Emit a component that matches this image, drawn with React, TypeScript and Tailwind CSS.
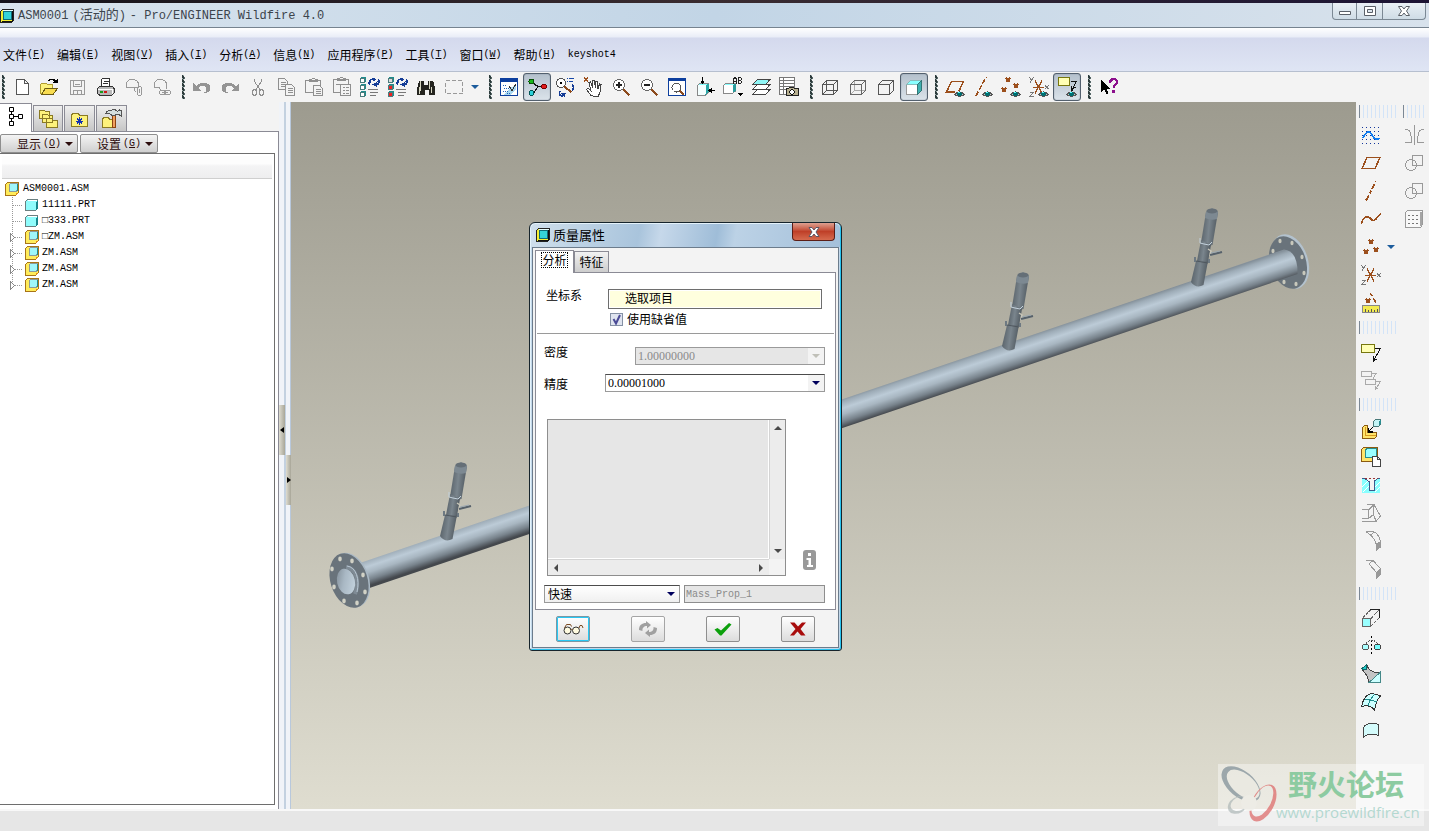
import React, { useState } from 'react';

interface Tool {
  id: string;
  label: string;
  active?: boolean;
}

const menus = [
  { text: '文件', key: 'F' },
  { text: '编辑', key: 'E' },
  { text: '视图', key: 'V' },
  { text: '插入', key: 'I' },
  { text: '分析', key: 'A' },
  { text: '信息', key: 'N' },
  { text: '应用程序', key: 'P' },
  { text: '工具', key: 'T' },
  { text: '窗口', key: 'W' },
  { text: '帮助', key: 'H' },
];

const fileTools: Tool[] = [
  { id: 'new', label: '新建' },
  { id: 'open', label: '打开' },
  { id: 'save', label: '保存' },
  { id: 'print', label: '打印' },
  { id: 'mail', label: '发送附件' },
  { id: 'link', label: '发送链接' },
];

const editTools: Tool[] = [
  { id: 'undo', label: '撤消' },
  { id: 'redo', label: '重做' },
  { id: 'cut', label: '剪切' },
  { id: 'copy', label: '复制' },
  { id: 'paste', label: '粘贴' },
  { id: 'pasteSpecial', label: '选择性粘贴' },
  { id: 'regen', label: '再生' },
  { id: 'regenList', label: '再生管理器' },
  { id: 'find', label: '查找' },
  { id: 'select', label: '选取框' },
];

const viewTools: Tool[] = [
  { id: 'repaint', label: '重画' },
  { id: 'spin', label: '旋转中心', active: true },
  { id: 'orient', label: '定向模式' },
  { id: 'hand', label: '外观库' },
  { id: 'zoomIn', label: '放大' },
  { id: 'zoomOut', label: '缩小' },
  { id: 'refit', label: '重新调整' },
  { id: 'reorient', label: '重定向' },
  { id: 'views', label: '已命名视图' },
  { id: 'layers', label: '层' },
  { id: 'viewMgr', label: '视图管理器' },
];

const displayTools: Tool[] = [
  { id: 'wireframe', label: '线框' },
  { id: 'hiddenLine', label: '隐藏线' },
  { id: 'noHidden', label: '消隐' },
  { id: 'shaded', label: '着色', active: true },
];

const datumTools: Tool[] = [
  { id: 'planeEye', label: '平面显示' },
  { id: 'axisEye', label: '轴显示' },
  { id: 'pointEye', label: '点显示' },
  { id: 'csysEye', label: '坐标系显示' },
  { id: 'noteEye', label: '注释显示', active: true },
];

const sideDatum: Tool[] = [
  { id: 'sketch', label: '草绘' },
  { id: 'plane', label: '平面' },
  { id: 'axis', label: '轴' },
  { id: 'curve', label: '曲线' },
  { id: 'points', label: '点' },
  { id: 'csys', label: '坐标系' },
  { id: 'measure', label: '分析特征' },
];

const sideNotes: Tool[] = [
  { id: 'note', label: '注释' },
  { id: 'noteCopy', label: '传播注释' },
];

const sideAssembly: Tool[] = [
  { id: 'assemble', label: '装配' },
  { id: 'create', label: '创建元件' },
  { id: 'hole', label: '孔' },
  { id: 'shell', label: '壳' },
  { id: 'round', label: '倒圆角' },
  { id: 'chamfer', label: '倒角' },
];

const sideShape: Tool[] = [
  { id: 'extrude', label: '拉伸' },
  { id: 'revolve', label: '旋转' },
  { id: 'sweep', label: '扫描' },
  { id: 'blend', label: '边界混合' },
  { id: 'style', label: '造型' },
];

const sideEdit: Tool[] = [
  { id: 'mirror', label: '镜像' },
  { id: 'merge', label: '合并' },
  { id: 'trim', label: '修剪' },
  { id: 'pattern', label: '阵列' },
];

const treeItems = [
  { name: '11111.PRT', part: true },
  { name: '□333.PRT', part: true },
  { name: '□ZM.ASM', part: false },
  { name: 'ZM.ASM', part: false },
  { name: 'ZM.ASM', part: false },
  { name: 'ZM.ASM', part: false },
];

const Eye = () => (
  <g>
    <path d="M9.5 17.5Q14.5 12.5 19.5 17.5Q14.5 21 9.5 17.5z" fill="#c4cccc" stroke="#555" />
    <circle cx="14.5" cy="17" r="2.4" fill="#006e70" />
    <path d="M13 15.5h2" stroke="#5ff" />
  </g>
);

const Cross = ({ x, y }: { x: number; y: number }) => (
  <path d={`M${x - 2} ${y - 2}l4 4m0-4l-4 4`} stroke="#9c4f1c" strokeWidth="1.5" />
);

const Block = ({ x, y, fill }: { x: number; y: number; fill: string }) => (
  <g>
    <path d={`M${x} ${y + 1}h4v4h-4z`} fill={fill} stroke="#4a7c7c" />
    <path d={`M${x} ${y}h5v4`} fill="none" stroke="#1f8c8c" />
  </g>
);

const Swirl = () => (
  <g fill="none" stroke="#143c96" strokeWidth="1.6">
    <path d="M9.5 6.500C9 3.500 11.500 1.500 14 2.500M19 3.500c.5 3.500-2 5-4.500 4" />
    <path d="M12.500 0v5l3.500-2.500zM16.500 5v5l-4-2.500z" fill="#143c96" stroke="none" />
    <path d="M7.500 5h4l-2 3zM17 4.500h3l-1.500-3z" fill="#143c96" stroke="none" />
  </g>
);

const Csys = () => (
  <g>
    <path d="M4 10.5h11M6 3.500l7 13M13 3.500l-7 13" stroke="#9c4f1c" strokeWidth="1.4" />
    <path d="M.5.500l2 2.500 2-2.500M2.500 3L1 5.500M.5 15.500h4l-4 4h4.500M16 8.500l3.500 3.500m0-3.500L16 12" stroke="#777" fill="none" />
  </g>
);

const Lens = ({ sign }: { sign: string }) => (
  <g>
    <path d="M12.5 12.5l6 6" stroke="#8c4a1c" strokeWidth="2" />
    <circle cx="8" cy="8" r="5.5" fill="#fff" stroke="#666" />
    <path d={sign} stroke="#222" strokeWidth="2" />
  </g>
);

const icons: Record<string, React.ReactNode> = {
  new: <path d="M5.500 2.500h8l3.500 3.500v11H5.500zM13.500 2.500v3.500H17" fill="#fff" stroke="#555" />,
  open: (
    <>
      <path d="M1.5 16V7.500l1.500-1.500h4l1.500 1.500h5V11H6l-3 6.500z" fill="#fdf27c" stroke="#b09c30" />
      <path d="M2.5 17.500L6.500 11H19l-5 6.500z" fill="#f8dc50" stroke="#6b5a12" />
      <path d="M9.5 4.500c1.500-3 5-3 7 0" fill="none" stroke="#000" strokeWidth="1.500" />
      <path d="M14 5.500h5v-4z" />
    </>
  ),
  save: (
    <g fill="none" stroke="#999">
      <path d="M3.500 3.500h14v14h-14zM6.500 3.500v6h8v-6M6.500 17.500v-4h8v4" />
      <path d="M8 7.500h5M10.500 14v3" />
    </g>
  ),
  print: (
    <>
      <path d="M6.500 9V2.500L8 1.500h6.500v8" fill="#fff" stroke="#333" />
      <path d="M8.500 4.500h5M8 6.500h5" stroke="#333" />
      <path d="M2.500 11.500L5 9h12l2 2.500v4.500l-2 2H4.500l-2-1.500z" fill="#b9b9b9" stroke="#333" />
      <path d="M3 12.500h14.500V17" stroke="#fff" fill="none" />
      <path d="M5 15h3" stroke="#1a9a1a" strokeWidth="2" />
      <path d="M9 15h3" stroke="#d01818" strokeWidth="2" />
    </>
  ),
  mail: (
    <g fill="none" stroke="#999">
      <path d="M3.500 10.500V6c2-5 9-5 12 0v4.500zM3.500 10.500h8v3l2 2" />
      <rect x="14.500" y="9.500" width="4" height="9" rx="2" />
      <path d="M16.500 12v4" />
    </g>
  ),
  link: (
    <g fill="none" stroke="#999">
      <path d="M15.500 11.500V6c-3-5-10-5-12 0v4.500h5l1 2.500" />
      <rect x="8.500" y="13.500" width="6" height="4" rx="2" />
      <rect x="13.500" y="13.500" width="6" height="4" rx="2" />
      <path d="M11 15.500h6" />
    </g>
  ),
  undo: <path d="M1 6v7.500h7.500L6 11c3-4 8.500-2.500 8.500 1 0 2-1.500 3.500-3.500 4.500 4-.5 7.500-2 7.500-5.500C18.500 5 9 3.500 4 9z" fill="#949494" />,
  redo: <path d="M19 6v7.500h-7.500L14 11c-3-4-8.500-2.500-8.500 1 0 2 1.500 3.500 3.500 4.500-4-.5-7.500-2-7.500-5.500C1.500 5 11 3.500 16 9z" fill="#949494" />,
  cut: (
    <g fill="none" stroke="#8f8f8f">
      <path d="M6.500 1.500v3l5.500 8M13.500 1.500v3L8 12.500" />
      <ellipse cx="6.500" cy="15.500" rx="2" ry="3" />
      <ellipse cx="13.500" cy="15.500" rx="2" ry="3" />
    </g>
  ),
  copy: (
    <g fill="#f3f3f3" stroke="#8f8f8f">
      <path d="M2.500 1.500h6l3 3v8h-9zM4.500 5.500h5M4.500 7.500h5M4.500 9.500h5" />
      <path d="M9.500 7.500h6l3 3v8h-9zM11.500 11.500h5M11.500 13.500h5M11.500 15.500h5" />
    </g>
  ),
  paste: (
    <g fill="#f3f3f3" stroke="#8f8f8f">
      <path d="M1.500 3.500h15v12h-15zM5.500 4.500v-2h2l1-1h2l1 1h2v2z" />
      <path d="M9.500 8.500h6l3 3v7h-9zM11.500 12.500h5M11.500 14.500h5M11.500 16.500h5" />
    </g>
  ),
  pasteSpecial: (
    <g fill="#f3f3f3" stroke="#8f8f8f">
      <path d="M1.500 2.500h15v13h-15zM5.500 3.500v-2h2l1-1h2l1 1h2v2zM4 7.500h4" />
      <path d="M8.500 7.500h10v11h-10zM10.500 10.500h2M14 10.500h3M10.500 13.500h2M14 13.500h3M10.500 16.500h2M14 16.500h3" />
    </g>
  ),
  regen: (
    <>
      <Block x={0.5} y={0.5} fill="#fff" />
      <Block x={0.5} y={7.5} fill="#fff" />
      <Block x={0.5} y={14.5} fill="#fff" />
      <path d="M8 12.500h10M10 15.500h8M10 18.500h6" stroke="#777" />
      <Swirl />
    </>
  ),
  regenList: (
    <>
      <Block x={0.5} y={0.5} fill="#ddd" />
      <Block x={0.5} y={7.5} fill="#e22" />
      <Block x={0.5} y={14.5} fill="#e22" />
      <path d="M8 12.500h10M10 15.500h8M10 18.500h6" stroke="#777" />
      <Swirl />
    </>
  ),
  find: (
    <>
      <path d="M3 3.500h5v4h4v-4h5l2 8v6h-6.500v-5h-4v5H1v-6z" fill="#24241f" />
      <path d="M4.500 4v10M3.500 10v7M13.500 4v8M15.500 10v6" stroke="#d8d8c4" />
    </>
  ),
  select: <path d="M1.500 3.500h17v13h-17z" fill="none" stroke="#999" strokeDasharray="4 2" />,
  repaint: (
    <>
      <path d="M1 1h18v18H1z" fill="#0d3f9e" />
      <path d="M2 5h16v13H2z" fill="#fff" />
      <path d="M4 18L17 6.500V12l-6 6z" fill="#a9d8f0" />
      <path d="M4 8.500h3M5 11.500h5M4 14.500h5M8 16.500h4" stroke="#2264b8" strokeDasharray="1 1" />
      <path d="M10 9l3 4.500L17 7" stroke="#333" fill="none" />
    </>
  ),
  spin: (
    <>
      <path d="M6 6l5 3.500-4 6M11 9.500h6" stroke="#111" strokeWidth="1.300" fill="none" />
      <circle cx="4.500" cy="4.500" r="2.500" fill="#18b818" stroke="#085008" />
      <circle cx="17" cy="9.500" r="2.500" fill="#e01c1c" stroke="#700" />
      <circle cx="4.500" cy="16" r="2.500" fill="#2cd0d8" stroke="#055" />
    </>
  ),
  orient: (
    <>
      <circle cx="6" cy="6" r="4.500" fill="#fff" stroke="#555" />
      <path d="M5 6h2" stroke="#000" strokeWidth="2" />
      <path d="M9.500 9.500l7 6" stroke="#8c4a1c" strokeWidth="2" />
      <path d="M12 1.500h1M14 1.500h5M12 4.500h1M14 4.500h4" stroke="#1647a8" />
      <path d="M17 7.500c3 3 1 5 0 5.500M5 14c-2 3 0 5 3 5" stroke="#143c96" strokeWidth="1.600" fill="none" />
      <path d="M6 16h5l-1.500 4z" fill="#143c96" />
    </>
  ),
  hand: (
    <>
      <Cross x={3} y={2.5} />
      <path d="M8 18.500L3.500 12.500l1.500-1.500 3 3-2-8.500 1.500-.5 2.500 6-.5-7 1.500-.5 1.500 7 .5-6 1.500.5.500 6.500 1.500-4.500 1.500.500-1 7.500-2 5z" fill="#fff" stroke="#444" />
    </>
  ),
  zoomIn: <Lens sign="M5 8h6M8 5v6" />,
  zoomOut: <Lens sign="M5 8h6" />,
  refit: (
    <>
      <path d="M1.500 1.500h17v17h-17z" fill="#fff" stroke="#0d3f9e" />
      <path d="M1 2.500h18" stroke="#0d3f9e" strokeWidth="3" />
      <circle cx="9.500" cy="10.500" r="4.500" fill="#fff" stroke="#555" />
      <path d="M13 14l4 4" stroke="#8c4a1c" strokeWidth="2" />
    </>
  ),
  reorient: (
    <>
      <path d="M2.500 8.500l2.500-2h8v9l-2.500 2.500h-8z" fill="#f4ffff" stroke="#888" />
      <path d="M3 8l2-1.500h8L11 8z" fill="#8ff" />
      <path d="M10.500 8.500l3-2v8.500l-3 2.500z" fill="#2aa6a6" />
      <path d="M7.500 0v5M15 13.500h5" stroke="#000" />
      <path d="M5 3.500h5L7.500 7zM16.500 11v5L13 13.500z" />
    </>
  ),
  views: (
    <>
      <path d="M.5 8.500l3-2.500h9v8l-3 2.500h-9z" fill="#fff" stroke="#888" />
      <path d="M1.500 8l2-1.500h8.500L10 8z" fill="#8ff" />
      <path d="M9.500 8.500l3-2v7.500l-3 2z" fill="#2a9c9c" />
      <path d="M10.500 6.500v-4l1-2h1l1 2v4M10.500 4.500h3M15.500.5h2l1 1v1l-1 1 1 1v1l-1 1h-2zM15.500 3.500h2" fill="none" stroke="#222" />
      <path d="M15 16h5l-2.500 3z" />
    </>
  ),
  layers: (
    <g stroke="#444">
      <path d="M1.500 17.500l5-5H19l-4.500 5z" fill="#fff" />
      <path d="M1.500 12.500l5-5H19l-4.500 5z" fill="#fff" />
      <path d="M1.500 7.500l5-5H19l-4.500 5z" fill="#8ff6f6" />
    </g>
  ),
  viewMgr: (
    <>
      <path d="M.5.500h15v17H.5zM.5 3.500h15M.5 6.500h15M.5 9.500h15M.5 12.500h15M4.500.5v17" fill="#fff" stroke="#777" />
      <path d="M7.500 11.500h2l1-1h4l1 1h4v7h-12z" fill="#b8b090" stroke="#222" />
      <circle cx="13" cy="15" r="2.300" fill="#fff" stroke="#111" />
    </>
  ),
  wireframe: <path d="M2.500 7.500h11v10h-11zM6.500 3.500h11v10h-11zM2.500 7.500l4-4M13.500 7.500l4-4M13.500 17.500l4-4M2.500 17.500l4-4" fill="none" stroke="#555" />,
  hiddenLine: (
    <>
      <path d="M6.500 3.500v10h11M2.500 17.500l4-4" fill="none" stroke="#aaa" />
      <path d="M2.500 7.500h11v10h-11zM2.500 7.500l4-4h11v10l-4 4M13.500 7.500l4-4" fill="none" stroke="#666" />
    </>
  ),
  noHidden: <path d="M2.500 7.500h11v10h-11zM2.500 7.500l4-4h11v10l-4 4M13.500 7.500l4-4" fill="none" stroke="#555" />,
  shaded: (
    <>
      <path d="M2.500 7.500h11v10h-11z" fill="#fff" stroke="#999" />
      <path d="M2.500 7.500l4-4h11l-4 4z" fill="#8ff" stroke="#8bb" />
      <path d="M13.500 7.500l4-4v10l-4 4z" fill="#3fb0b0" stroke="#377" />
    </>
  ),
  planeEye: (
    <>
      <path d="M10 15H1.500l5-10.500h12L14 14" fill="none" stroke="#9c4f1c" strokeWidth="1.500" />
      <Eye />
    </>
  ),
  axisEye: (
    <>
      <path d="M3 19L13 0" stroke="#9c4f1c" strokeWidth="1.600" strokeDasharray="5 2" />
      <Eye />
    </>
  ),
  pointEye: (
    <>
      <Cross x={7} y={3} />
      <Cross x={3} y={13} />
      <Cross x={15} y={9} />
      <Eye />
    </>
  ),
  csysEye: (
    <>
      <Csys />
      <Eye />
    </>
  ),
  noteEye: (
    <>
      <path d="M1.500.5h11v8h-11z" fill="#ffffb4" stroke="#77770f" />
      <path d="M14 4.500h5l-4 9M14.500 9v4l4-3" fill="none" stroke="#111" />
      <Eye />
    </>
  ),
  help: (
    <>
      <path d="M3 3v12l3-3 2.500 5 2-1L8 11.500h4z" />
      <path d="M12 6c0-5 7-5 7-1 0 3-3.500 3-3.500 6" fill="none" stroke="#8c0f8c" strokeWidth="2.200" />
      <path d="M14 13h3v3h-3z" fill="#8c0f8c" />
    </>
  ),
  sketch: (
    <>
      {[2.5, 6.5, 10.5, 14.5, 18.5].map((y) => (
        <path key={y} d={`M1 ${y}h18`} stroke="#14379c" strokeDasharray="1 3" />
      ))}
      <path d="M2 13c4-8 7-7 9-3 2 4 5 6 7 3" fill="none" stroke="#0f7cf0" strokeWidth="1.800" />
    </>
  ),
  plane: <path d="M1 15.500L6 4.500h13l-5 11z" fill="none" stroke="#9c4f1c" strokeWidth="1.500" />,
  axis: <path d="M5 19.500L15 .5" stroke="#9c4f1c" strokeWidth="1.800" strokeDasharray="6 2 3 2" />,
  curve: <path d="M.5 15.500c1.500-9 7-9 9.500-5.500 3 4 5 0 9.500-5.500" fill="none" stroke="#9c4f1c" strokeWidth="1.500" />,
  points: (
    <>
      <Cross x={10} y={5} />
      <Cross x={5} y={15} />
      <Cross x={15} y={13} />
    </>
  ),
  csys: <Csys />,
  measure: (
    <>
      <Cross x={7} y={8} />
      <path d="M9.500.5l2 3M12.500 5.500l2.500 4" stroke="#9c4f1c" strokeWidth="1.600" />
      <path d="M1.500 12.500h17v7h-17z" fill="#f2ea50" stroke="#888" />
      <path d="M4.500 16v3M7.500 17v2M10.500 16v3M13.500 17v2M16.500 16v3" stroke="#555" />
    </>
  ),
  note: (
    <>
      <path d="M.5 2.500h13v8H.5z" fill="#ffffb4" stroke="#77770f" />
      <path d="M14 6.500h5.500l-7 12M12.500 14v5l4-2.500" fill="none" stroke="#111" />
    </>
  ),
  noteCopy: (
    <g fill="none" stroke="#aaa">
      <path d="M.5 1.500h10v5H.5zM11 3.500h4l-3 5" />
      <path d="M4.500 9.500h10v5h-10zM15 11.500h4.500l-5 8M14.500 15.500v4l3-2" />
    </g>
  ),
  assemble: (
    <>
      <path d="M1.500 8.500l2-2h3v7h9v4l-2 2h-12z" fill="#ffe46a" stroke="#8a5a10" />
      <path d="M4.500 8v8.500h10" fill="none" stroke="#d89a20" />
      <path d="M12.500 2.500l2-2h5v5l-2 2h-5z" fill="#c4f4f6" stroke="#4a7878" />
      <path d="M17.500 3l2-2v4l-2 2z" fill="#2a8c90" />
      <path d="M12 8l-4 4M7.500 9v4h4" stroke="#000" strokeWidth="1.400" fill="none" />
    </>
  ),
  create: (
    <>
      <path d="M.5 2.500l2-2h14v12l-3 2H.5z" fill="#ffe46a" stroke="#8a5a10" />
      <path d="M4.500 3.500l1-2h10v9h-11z" fill="#9ff" stroke="#2a8c8c" />
      <path d="M11.500 9.500h5l3 3v7h-8zM16.500 9.500v3h3" fill="#fff" stroke="#444" />
    </>
  ),
  hole: (
    <>
      <path d="M1 4h3l4 3v9h5V7l4-3h2v14H1z" fill="#8ff" />
      <path d="M1 12l6-6M2 17l6-6M13 13l6-6M14 17l5-5" stroke="#fff" />
      <path d="M1 3.500h3l4 3v9h5v-9l4-3h2" fill="none" stroke="#3c5a8c" />
      <path d="M4 3.500h13" stroke="#933" strokeDasharray="2 2" />
    </>
  ),
  shell: <path d="M1 6.500h6.500v9H1M1 18.500h14l4.500-5.500L13.500 2.500V1.500H6M7.500 15.500l5-4V2L7.500 7M12.500 11.500L15 18" fill="none" stroke="#999" />,
  round: (
    <g fill="none" stroke="#999">
      <path d="M5 .5h7c5 2 7 6 7.500 11l-4 4c0-6-3-10-10.500-15M9 4l5-3" />
      <path d="M15 13l4.500-2v5L15.500 19z" fill="#999" />
    </g>
  ),
  chamfer: (
    <g fill="none" stroke="#999">
      <path d="M4.500 1.500H12l7.500 8-4 4L8 5l4-3.500" />
      <path d="M15.500 13.500l4-4v6l-4 4z" fill="#999" />
    </g>
  ),
  extrude: (
    <>
      <path d="M2 9.500L9.500 2M10 10.500l7.500-8M10 18L18 10" fill="none" stroke="#666" strokeDasharray="3 1" />
      <path d="M9 1.500h9.500V10" fill="none" stroke="#222" strokeWidth="1.500" />
      <path d="M1.500 10.500h8v8h-8z" fill="#9ff" stroke="#666" />
    </>
  ),
  revolve: (
    <>
      <path d="M10.500 0v20" stroke="#000" strokeDasharray="2 2" />
      <path d="M5 8c3-5 8-5 12 0" fill="none" stroke="#555" strokeDasharray="2 1" />
      <circle cx="4.500" cy="11" r="3" fill="#aff" stroke="#555" />
      <circle cx="16.500" cy="11" r="3" fill="#7ff" stroke="#444" />
    </>
  ),
  sweep: (
    <>
      <path d="M1 5l5-4c1 5 6 8 13 7.500v10H8L6 12z" fill="#c4c4c4" stroke="#444" />
      <path d="M8 18.500L19 8.500v10z" fill="#cff" stroke="#488" />
      <path d="M.5 5l5-4.500v5z" fill="#2cc" stroke="#166" />
    </>
  ),
  blend: (
    <>
      <path d="M.5 14.500C2 8 5 3 9 2c4-1 6 0 10.500 2-4 4-5 8-6 14-3-4-8-5-13-3.500z" fill="#cff" stroke="#333" />
      <path d="M4 8c5-1 8 0 11.500 2M7 14c1-5 3-8 7-12" fill="none" stroke="#1f8c8c" />
    </>
  ),
  style: <path d="M2.500 17.500v-10c3-5 10-5 15-3v11c-5-2-11-2-15 2z" fill="#d4fbfb" stroke="#444" />,
  mirror: <path d="M10.500 0v20M1 4.500h2c4 1 4 5 4.500 13H1M20 4.500h-2c-4 1-4 5-4.500 13H20" fill="none" stroke="#999" />,
  merge: (
    <g fill="none" stroke="#999">
      <path d="M8.500 2.500h10v10h-10z" />
      <circle cx="7" cy="12" r="5.500" />
    </g>
  ),
  trim: (
    <g fill="none" stroke="#999">
      <path d="M8.500 2.500h10v10h-10z" />
      <circle cx="7" cy="12" r="5.500" />
    </g>
  ),
  pattern: (
    <>
      <path d="M1.500 3.500l2-2h15v14l-2 3h-15z" fill="#f8f8f8" stroke="#999" />
      <path d="M17 3v14" stroke="#a5a5a5" strokeWidth="2" />
      {[6.5, 10.5, 14.5].map((y) => (
        <path key={y} d={`M4 ${y}h11`} stroke="#777" strokeDasharray="2 2" />
      ))}
    </>
  ),
};

const AppIcon = () => (
  <svg viewBox="0 0 14 14" shapeRendering="crispEdges" className="size-[14px] shrink-0">
    <path d="M.5 2.500l2-2h11v11l-2 2H.5z" fill="#f5f034" stroke="#222" />
    <path d="M3.500 2.500h8v8h-8z" fill="#35d4d8" stroke="#0f6c78" />
    <path d="M3 1.500h10" stroke="#e8ffff" />
    <path d="M12.500 2v10.500H2" fill="none" stroke="#111" />
  </svg>
);

const AsmIcon = () => (
  <svg viewBox="0 0 14 14" shapeRendering="crispEdges" className="size-[14px] shrink-0">
    <path d="M.5 2.500l2-2h11v10l-3 3H.5z" fill="#ffec5a" stroke="#a87418" />
    <path d="M11 11h2v1l-2 1z" fill="#e08a18" />
    <path d="M4.500 2.500l1-1h7v7l-2 1h-6z" fill="#9ff6fa" stroke="#8a9a9a" />
    <path d="M12 2h1v7h-1z" fill="#1f8c94" />
  </svg>
);

const PartIcon = () => (
  <svg viewBox="0 0 14 14" shapeRendering="crispEdges" className="size-[14px] shrink-0">
    <path d="M.5 3.500l2-2h10v9l-2 2H.5z" fill="#8ffcfc" stroke="#6a7f80" />
    <path d="M2 3l1-1h9l-1 1z" fill="#fff" />
    <path d="M11 4l1-1h1v8l-2 1z" fill="#17868c" />
  </svg>
);

const Caret = ({ className = '' }: { className?: string }) => (
  <svg viewBox="0 0 8 4" className={`h-1 w-2 ${className}`}>
    <path d="M0 0h8L4 4z" fill="currentColor" />
  </svg>
);

const ToolButton = ({ tool }: { tool: Tool }) => (
  <button
    aria-label={tool.label}
    className={`flex size-7 shrink-0 items-center justify-center rounded-[3px] ${
      tool.active ? 'border border-[#53606e] bg-gradient-to-b from-[#b4c0cc] to-[#dbe3ea] shadow-[inset_0_0_1px_#53606e]' : ''
    }`}
  >
    <svg viewBox="0 0 20 20" shapeRendering="crispEdges" className="size-5 shrink-0">
      {icons[tool.id]}
    </svg>
  </button>
);

const Grip = ({ first }: { first?: boolean }) => (
  <div className={`flex shrink-0 ${first ? 'w-[7px] pl-[2px]' : 'w-[13px] pl-[7px]'}`}>
    <span className="h-6 w-px bg-[repeating-linear-gradient(180deg,#2c3a3a_0_3px,#9aa_3px_4px)]" />
    <span className="h-6 w-px bg-[repeating-linear-gradient(180deg,#9aa_0_1px,#2c3a3a_1px_4px)]" />
    <span className="h-6 w-px bg-[repeating-linear-gradient(180deg,transparent_0_2px,#566_2px_4px)]" />
  </div>
);

const SideGrip = ({ className }: { className: string }) => (
  <div className={`flex items-center ${className}`}>
    <span className="ml-[3px] h-[13px] flex-1 border-l border-[#7b8794] bg-[repeating-linear-gradient(90deg,transparent_0_3px,#d3e4f8_3px_4px)]" />
  </div>
);

const Nozzle = ({ x, y }: { x: number; y: number }) => (
  <g transform={`translate(${x} ${y})`}>
    <path d="M4 -43L9 -74Q15 -81 21 -74L15.500 -41Q9 -39 4 -43z" fill="url(#tube)" />
    <path d="M0 -25L4 -46 14 -41 11 -24z" fill="url(#tube)" />
    <path d="M-6 -4L-1 -25H11L6.500 -1Q-1 3 -6 -4z" fill="url(#tube)" />
    <path d="M9 -74Q15 -81 21 -74L20 -67Q14 -65 8 -68z" fill="#7d8992" />
    <ellipse cx="15" cy="-75" rx="5.500" ry="2.500" fill="#656f77" />
    <path d="M3 -48v5l4 1 5 1 3-3" fill="none" stroke="#c3d1dc" />
    <path d="M-2 -29v5M12 -27v4" fill="none" stroke="#6d7982" strokeWidth="2" />
    <path d="M-1 -25l12 2" stroke="#4f575e" />
    <path d="M11 -37l3 2-1 5" stroke="#c9c7ba" strokeWidth="1.500" fill="none" />
    <path d="M13 -31l12-3" stroke="#56616b" strokeWidth="2" />
    <path d="M14 -33l9-2" stroke="#9aa7b1" />
  </g>
);

const leftHoles = [[340, 559], [352, 561], [332, 569], [363, 575], [334, 587], [365, 592], [344, 601], [357, 603]];
const rightHoles = [[1280, 241], [1292, 243], [1273, 251], [1302, 257], [1304, 273], [1284, 282], [1296, 284]];

const Model = () => (
  <svg viewBox="291 102 1065 707" className="absolute inset-0 size-full">
    <defs>
      <linearGradient id="pipe" gradientUnits="userSpaceOnUse" x1="980" y1="352" x2="989" y2="379">
        <stop offset="0" stopColor="#85919b" />
        <stop offset=".12" stopColor="#9eacb7" />
        <stop offset=".35" stopColor="#bccbd7" />
        <stop offset=".55" stopColor="#a8b6c1" />
        <stop offset=".8" stopColor="#78838c" />
        <stop offset="1" stopColor="#44484d" />
      </linearGradient>
      <linearGradient id="tube" x1="0" x2="1" y1="0" y2=".2">
        <stop offset="0" stopColor="#505960" />
        <stop offset=".55" stopColor="#7a858d" />
        <stop offset="1" stopColor="#535c63" />
      </linearGradient>
      <linearGradient id="bore" x1="0" x2="1" y1="0" y2=".6">
        <stop offset="0" stopColor="#7d8993" />
        <stop offset=".5" stopColor="#a9b8c4" />
        <stop offset="1" stopColor="#c0cfda" />
      </linearGradient>
    </defs>

    {/* Right flange sits behind the pipe */}
    <ellipse cx="1290" cy="261.5" rx="18" ry="28" transform="rotate(-18 1290 261.5)" fill="#b3c2ce" />
    <ellipse cx="1288" cy="262.5" rx="18" ry="27" transform="rotate(-18 1288 262.5)" fill="#69737b" />
    {rightHoles.map(([x, y]) => (
      <ellipse key={`${x}-${y}`} cx={x} cy={y} rx="1.6" ry="2.3" fill="#c8c8bc" />
    ))}

    <path d="M360 563L1284 249.500Q1298 251 1297.500 274L368 588.500z" fill="url(#pipe)" />

    {/* Left flange */}
    <ellipse cx="350.5" cy="580" rx="18.5" ry="28" transform="rotate(-18 350.5 580)" fill="#a9b8c4" />
    <ellipse cx="349" cy="580.5" rx="18.5" ry="28" transform="rotate(-18 349 580.5)" fill="#69737b" />
    <path d="M346 567c10 1 14 14 9 27" fill="none" stroke="#7f8b95" strokeWidth="4" />
    <path d="M347 566c9 1 13 13 10 26" fill="none" stroke="#b7c6d2" />
    <ellipse cx="346" cy="581.5" rx="9" ry="13" transform="rotate(-12 346 581.5)" fill="url(#bore)" />
    {leftHoles.map(([x, y]) => (
      <ellipse key={`${x}-${y}`} cx={x} cy={y} rx="1.8" ry="2.4" fill="#d2d2c6" />
    ))}

    <Nozzle x={446} y={540} />
    <Nozzle x={1008} y={350} />
    <Nozzle x={1197} y={286} />
  </svg>
);

const dialogButton = 'flex h-[26px] w-[34px] items-center justify-center rounded-[2px] border bg-gradient-to-b from-white to-[#dcdcdc]';

const MassDialog = () => {
  const [useDefault, setUseDefault] = useState(true);

  return (
    <section
      aria-label="质量属性"
      className="absolute left-[238px] top-[120px] w-[313px] rounded-t-md rounded-b-[3px] border border-[#16242c] bg-[#c3d8ea] px-[2px] pb-[2px] shadow-[inset_-1px_-1px_0_#28c4f0,inset_1px_1px_0_#e4f2fa]"
    >
      <header className="-mx-px mt-px flex h-[23px] items-start rounded-t-[5px] bg-[linear-gradient(100deg,#cfdfec_0%,#a9c4dc_35%,#c6d8ea_42%,#9fbdd8_60%,#bcd2e6_66%,#a4c0da_100%)]">
        <div className="flex h-[22px] items-center gap-[3px] pl-[5px]">
          <AppIcon />
          <h2 className="text-[13px] leading-4 text-black">质量属性</h2>
        </div>
        <button
          aria-label="关闭"
          className="-mt-px ml-auto mr-[5px] flex h-[18px] w-[43px] items-center justify-center rounded-b-[4px] border border-t-0 border-[#5b1d16] bg-gradient-to-b from-[#dda091] via-[#bf3f28] via-50% to-[#d56a4e]"
        >
          <svg viewBox="0 0 12 10" className="h-[10px] w-3">
            <path d="M1 .5h3l2 2.500 2-2.500h3L8 5l3 4.500H8L6 7 4 9.500H1L4 5z" fill="#fff" stroke="#5d5564" />
          </svg>
        </button>
      </header>

      <div className="border border-[#6c7c8c] bg-[#f3f3f3]">
        <div role="tablist" className="flex h-6 items-end pl-[2px]">
          <button role="tab" aria-selected className="relative z-10 -mb-px flex h-[23px] w-[39px] items-center justify-center border border-b-0 border-[#8b8b95] bg-white pb-1">
            <span className="border border-dotted border-black text-xs leading-[14px]">分析</span>
          </button>
          <button role="tab" aria-selected={false} className="flex h-[21px] w-[35px] items-center justify-center border border-b-0 border-[#8b8b95] bg-gradient-to-b from-[#f2f2f2] to-[#cdcdcd] text-xs">
            特征
          </button>
        </div>

        <div className="mx-[2px] border border-[#8b8b95] bg-white pb-[6px] pt-4 text-xs">
          <div className="flex items-start pr-[13px]">
            <label htmlFor="csys" className="w-[72px] shrink-0 pl-[10px] leading-3">坐标系</label>
            <input
              id="csys"
              defaultValue="选取项目"
              className="h-5 min-w-0 flex-1 border border-[#6e6e6e] bg-[#ffffde] pb-[3px] pl-4 text-xs leading-4 shadow-[inset_0_0_0_1px_#fff] outline-none"
            />
          </div>

          <div className="mt-1 flex h-[13px] items-start gap-1 pl-[74px]">
            <span className="relative flex size-[13px]">
              <input
                id="use-default"
                type="checkbox"
                checked={useDefault}
                onChange={(e) => setUseDefault(e.target.checked)}
                className="size-[13px] appearance-none border border-[#8591a5] bg-[#dfe4ef]"
              />
              {useDefault && (
                <svg viewBox="0 0 13 13" className="pointer-events-none absolute inset-0">
                  <path d="M3.500 6l2.500 4.500L10 2" fill="none" stroke="#4b4b96" strokeWidth="2" />
                </svg>
              )}
            </span>
            <label htmlFor="use-default" className="leading-3">使用缺省值</label>
          </div>

          <hr className="mx-px mt-[7px] border-t border-[#9a9a9a]" />

          <div className="mt-[13px] flex h-[18px] items-start justify-between pl-2 pr-[10px]">
            <label htmlFor="density" className="leading-[10px]">密度</label>
            <div className="relative w-[190px]">
              <select id="density" disabled className="block h-[18px] w-full appearance-none border border-[#9a9a9a] bg-[#e6e6e6] pl-[2px] font-['Liberation_Serif','Noto_Sans_CJK_SC',serif] text-xs leading-4 text-[#8a8a8a] opacity-100">
                <option>1.00000000</option>
              </select>
              <span className="pointer-events-none absolute inset-y-px right-px flex w-4 items-center justify-center bg-[#f3f3f3]">
                <Caret className="text-[#c0c0b8]" />
              </span>
            </div>
          </div>

          <div className="mt-[9px] flex h-[18px] items-end justify-between pl-2 pr-[10px]">
            <label htmlFor="accuracy" className="leading-4">精度</label>
            <div className="relative w-[220px]">
              <select id="accuracy" className="block h-[18px] w-full appearance-none border border-[#9a9a9a] border-t-[#4c4c4c] bg-white pl-[2px] font-['Liberation_Serif','Noto_Sans_CJK_SC',serif] text-xs leading-4">
                <option>0.00001000</option>
              </select>
              <span className="pointer-events-none absolute inset-y-px right-px flex w-4 items-center justify-center bg-[#f3f3f3]">
                <Caret className="text-[#00005c]" />
              </span>
            </div>
          </div>

          <div className="mt-[27px] flex items-end pl-[11px]">
            <div className="grid h-[157px] w-[239px] grid-cols-[1fr_16px] grid-rows-[1fr_16px] border border-[#8e8e8e] bg-[#e6e6e6] text-[#4a4a4a]">
              <div className="border-b border-r border-white" />
              <div className="flex flex-col items-center justify-between border-l border-[#d4d4d4] bg-[#ececec] py-1.5">
                <Caret className="rotate-180" />
                <Caret />
              </div>
              <div className="flex items-center justify-between border-t border-[#d4d4d4] bg-[#ececec] px-1">
                <Caret className="rotate-90" />
                <Caret className="-rotate-90" />
              </div>
              <div className="bg-[#f3f3f3]" />
            </div>
            <button aria-label="信息" className="mb-1.5 ml-[17px]">
              <svg viewBox="0 0 14 20" className="h-5 w-[14px]">
                <rect width="13" height="20" rx="3" fill="#999" />
                <path d="M5 3h3v3H5zM3.500 8h4.500v7h2v2h-6v-2h1.500v-5h-2z" fill="#fff" />
              </svg>
            </button>
          </div>

          <div className="mt-[9px] flex gap-1 pl-2 pr-[10px]">
            <div className="relative w-[136px]">
              <select aria-label="分析类型" className="block h-[18px] w-full appearance-none border border-[#9a9a9a] border-t-[#4c4c4c] bg-gradient-to-b from-white to-[#f0f0f0] pl-[3px] text-xs leading-4">
                <option>快速</option>
              </select>
              <Caret className="pointer-events-none absolute right-[5px] top-[7px] text-[#00005c]" />
            </div>
            <input
              aria-label="名称"
              disabled
              defaultValue="Mass_Prop_1"
              className="h-[18px] min-w-0 flex-1 border border-[#8e8e8e] bg-[#e6e6e6] pl-px font-['Liberation_Mono',monospace] text-[10px] text-[#8a8a8a]"
            />
          </div>
        </div>

        <div className="flex gap-[41px] pb-[5px] pl-[23px] pt-1.5">
          <button aria-label="预览" className={`${dialogButton} border-[#7a98a4] shadow-[inset_0_0_0_1px_#28c8f4]`}>
            <svg viewBox="0 0 22 14" className="h-[14px] w-[22px]">
              <circle cx="5.5" cy="8.5" r="3.5" fill="#fffbe0" stroke="#333" />
              <circle cx="14" cy="8.5" r="3.5" fill="#fffbe0" stroke="#333" />
              <path d="M9 8c.5-1 1-1 1.500 0M2.500 6l2-3.500h4l1 2M17 6l1-2.500h2l1 2.500" fill="none" stroke="#7a4a20" />
            </svg>
          </button>
          <button aria-label="重新计算" className={`${dialogButton} border-[#a5a5a5]`}>
            <svg viewBox="0 0 20 16" className="h-4 w-5" fill="#a0a0a0">
              <path d="M1 9C1 4 4 2 8 2V0l5 4-4 3.500V5C6 5 4 7 4.500 10z" />
              <path d="M19 7c0 5-3 7-7 7v2l-5-4 4-3.500V11c3 0 5-2 4.500-5z" />
            </svg>
          </button>
          <button aria-label="确定" className={`${dialogButton} border-[#8e8e8e]`}>
            <svg viewBox="0 0 18 14" className="h-[14px] w-[18px]">
              <path d="M.5 7.500L3.500 6 7 8.500 15 1l2.500 1.500L7.500 13.500H6z" fill="#0ca00c" />
            </svg>
          </button>
          <button aria-label="取消" className={`${dialogButton} border-[#8e8e8e]`}>
            <svg viewBox="0 0 16 14" className="h-[14px] w-4">
              <path d="M0 .5h4.500L8 4.500 12 .5h4L10.500 7l5 6.500H11L7.500 9.500 4 13.500H0L5.500 7z" fill="#a80c0c" />
            </svg>
          </button>
        </div>
      </div>
    </section>
  );
};

const panelTab = 'flex h-[27px] items-center justify-center border border-b-0 border-[#8b8b95] bg-gradient-to-b from-[#efefef] to-[#c4c4c4]';

const ModelTree = () => (
  <aside className="flex w-[279px] shrink-0 flex-col">
    <div role="tablist" className="flex h-[30px] items-end gap-px">
      <button role="tab" aria-selected aria-label="模型树" className="relative z-10 flex h-[29px] w-8 justify-center border-r border-t border-[#8b8b95] bg-white pt-[3px]">
        <svg viewBox="0 0 14 20" className="h-5 w-[14px]" fill="#fff" stroke="#000">
          <path d="M2.500 5v9M5 9.500h4" />
          <path d="M.5.500h4v4h-4zM.5 7.500h4v4h-4zM9.500 7.500h4v4h-4zM.5 14.500h4v4h-4z" />
        </svg>
      </button>
      <button role="tab" aria-selected={false} aria-label="文件夹" className={`${panelTab} w-[30px]`}>
        <svg viewBox="0 0 20 20" shapeRendering="crispEdges" className="size-5" fill="#fdf27c" stroke="#8a7a24">
          <path d="M1.500 9V2l1-1h4l1 1.500h4V9zM4.500 13V6l1-1h4l1 1.500h4V13zM8.500 18.500v-8l1-1h4l1 1.500h4.500v7.500z" />
        </svg>
      </button>
      <button role="tab" aria-selected={false} aria-label="收藏夹" className={`${panelTab} w-[31px]`}>
        <svg viewBox="0 0 20 20" shapeRendering="crispEdges" className="size-5">
          <path d="M1.500 17.500V6L3 4.500h5L9.500 6h8v11.500z" fill="#fdf27c" stroke="#8a7a24" />
          <path d="M9.500 8v8M6 12h7M7 9.500l5 5M12 9.500l-5 5" stroke="#1432b4" />
        </svg>
      </button>
      <button role="tab" aria-selected={false} aria-label="连接" className={`${panelTab} w-[31px]`}>
        <svg viewBox="0 0 20 20" shapeRendering="crispEdges" className="size-5">
          <path d="M.5 18.500V10L2 8.500h4L7.500 10h4v8.500z" fill="#fdf27c" stroke="#8a7a24" />
          <path d="M10.500 6h3v12.500q-1.500 1-3 0z" fill="#f0a060" stroke="#8a4410" />
          <path d="M3.500 4.500c2-3.500 5-4 10-3.500l2 1.500 2-1.500 2 1v5l-3-1.500-3 .5h-4L7 4z" fill="#d4dede" stroke="#555" />
        </svg>
      </button>
    </div>

    <div className="-mt-px flex min-h-0 flex-1 flex-col border-r border-t border-[#8b8b95] bg-white pb-1 pr-[3px] pt-[2px]">
      <div className="flex gap-[2px]">
        {[['显示', 'O'], ['设置', 'G']].map(([text, key]) => (
          <button
            key={key}
            className="flex h-[19px] w-[78px] items-center rounded-[2px] border border-[#8e8e8e] bg-gradient-to-b from-[#f4f4f4] to-[#cfcfcf] pl-4 text-xs leading-4 text-[#2c0c0c]"
          >
            {text}
            <span className="pl-[2px] font-['Liberation_Mono',monospace] text-[10px]">
              (<u>{key}</u>)
            </span>
            <Caret className="ml-1" />
          </button>
        ))}
      </div>

      <div className="min-h-0 flex-1 border-b border-r border-t border-[#6e6e6e] pl-[2px] pr-[2px] pt-[2px]">
        <div className="h-[23px] border-b border-[#cfcfcf] bg-[linear-gradient(180deg,#fdfdfd_0_35%,#f4f4f5_45%,#eeeeef_100%)]" />
        <ul className="pt-[2px] font-['Liberation_Mono',monospace] text-[10px] leading-4">
          <li className="flex h-4 items-center gap-1 pl-[3px]">
            <AsmIcon />
            <span className="leading-[18px]">ASM0001.ASM</span>
          </li>
          {treeItems.map((item, i) => (
            <li key={i} className="flex h-4 items-center pl-[6px]">
              <svg viewBox="0 0 17 16" shapeRendering="crispEdges" className="h-4 w-[17px] shrink-0" fill="none" stroke="#999">
                <path d={i < treeItems.length - 1 ? 'M4.500 0v16' : 'M4.500 0v8'} strokeDasharray="1 1" />
                <path d="M5 8.500h10" strokeDasharray="1 1" />
                {!item.part && <path d="M2.500 4.500v8l4-4z" fill="#fff" stroke="#888" />}
              </svg>
              {item.part ? <PartIcon /> : <AsmIcon />}
              <span className="pl-[3px] leading-[18px]">{item.name}</span>
            </li>
          ))}
        </ul>
      </div>
    </div>
  </aside>
);

const Splitter = () => (
  <div className="flex w-3 shrink-0">
    <div className="flex w-[7px] flex-col justify-center border-r-2 border-[#c3d1e0] bg-[#f0f3f8] pb-[52px]">
      <button aria-label="折叠导航器" className="flex h-[50px] w-[6px] items-center justify-center bg-gradient-to-r from-[#dedcd0] to-[#a8a698]">
        <svg viewBox="0 0 4 6" className="h-1.5 w-1">
          <path d="M4 0v6L0 3z" />
        </svg>
      </button>
    </div>
    <div className="flex w-[5px] flex-col justify-center border-r border-[#b8c8dc] bg-[#f0f3f8] pt-12">
      <button aria-label="展开浏览器" className="flex h-[50px] w-[5px] items-center justify-center bg-gradient-to-r from-[#dedcd0] to-[#a8a698]">
        <svg viewBox="0 0 4 6" className="h-1.5 w-1">
          <path d="M0 0v6l4-3z" />
        </svg>
      </button>
    </div>
  </div>
);

const SideBar = () => (
  <aside className="flex w-[73px] shrink-0">
    <div className="flex w-[44px] flex-col">
      <SideGrip className="h-[19px] w-[41px]" />
      {sideDatum.map((tool) => (
        <div key={tool.id} className="flex items-center pl-px">
          <ToolButton tool={tool} />
          {tool.id === 'points' && (
            <button aria-label="更多基准点" className="pl-[2px] text-[#1c5c9c]">
              <Caret />
            </button>
          )}
        </div>
      ))}
      <SideGrip className="h-[21px] w-[41px]" />
      <div className="pl-px">{sideNotes.map((tool) => <ToolButton key={tool.id} tool={tool} />)}</div>
      <SideGrip className="h-[21px] w-[41px]" />
      <div className="pl-px">{sideAssembly.map((tool) => <ToolButton key={tool.id} tool={tool} />)}</div>
      <SideGrip className="h-[21px] w-[41px]" />
      <div className="pl-px">{sideShape.map((tool) => <ToolButton key={tool.id} tool={tool} />)}</div>
    </div>
    <div className="w-7">
      <SideGrip className="h-[19px] w-[25px]" />
      {sideEdit.map((tool) => <ToolButton key={tool.id} tool={tool} />)}
    </div>
  </aside>
);

const Watermark = () => (
  <div className="pointer-events-none absolute bottom-[5px] right-[5px] flex h-[62px] w-[206px] bg-white/40">
    <svg viewBox="0 0 60 62" className="h-[62px] w-[60px] shrink-0" fillRule="evenodd" opacity=".65">
      {/* Three crescent rings of the logo */}
      <path transform="translate(23 20) rotate(-50)" d="M-13 0a13 23 0 1 0 26 0a13 23 0 1 0-26 0zM-9.500 2a10.500 19.500 0 1 0 21 0a10.500 19.500 0 1 0-21 0z" fill="#73858f" />
      <path transform="translate(45 39) rotate(28)" d="M-11 0a11 20 0 1 0 22 0a11 20 0 1 0-22 0zM-10-1.500a8.500 17 0 1 0 17 0a8.500 17 0 1 0-17 0z" fill="#dc5a5a" />
      <path transform="translate(20 41) rotate(60)" d="M-8 0a8 11 0 1 0 16 0a8 11 0 1 0-16 0zM-7-1.500a6.500 9 0 1 0 13 0a6.500 9 0 1 0-13 0z" fill="#a9b3b3" />
      <circle cx="31" cy="39" r="8" fill="#efeee8" />
    </svg>
    <div className="-ml-[2px] whitespace-nowrap">
      <p className="pl-3 text-[29px] font-bold leading-[38px] text-[#8dcba1]">野火论坛</p>
      <p className="font-['Open_Sans',sans-serif] text-[15px] leading-5 text-[#b4d8d0]">www.proewildfire.cn</p>
    </div>
  </div>
);

export default function App() {
  return (
    <div className="relative flex h-screen flex-col overflow-hidden bg-[#f3f3f3] font-['Noto_Sans_CJK_SC',sans-serif] text-black">
      <div className="h-[3px] shrink-0 bg-gradient-to-r from-[#14121a] via-[#3a2c30] to-[#1c1434]" />

      {/* Title bar */}
      <header className="flex h-[25px] shrink-0 items-start border-b border-[#76838f] bg-gradient-to-r from-[#d9e4ee] via-[#c2d5e6] to-[#d8e2ec]">
        <div className="flex h-[25px] items-center gap-[4px]">
          <AppIcon />
          <h1 className="flex items-center gap-1 font-['Liberation_Mono','Noto_Sans_CJK_SC',monospace] text-xs text-[#3c444c]">
            <span>ASM0001</span>
            <span className="flex items-center">
              (<span className="text-[13px] leading-5">活动的</span>)
            </span>
            <span>- Pro/ENGINEER Wildfire 4.0</span>
          </h1>
        </div>
        <div className="ml-auto mr-[3px] flex h-[17px] divide-x divide-[#7b8894] rounded-b-[4px] border border-t-0 border-[#7b8894] bg-gradient-to-b from-[#e9f0f5] to-[#cfdce6]">
          <button aria-label="最小化" className="flex w-6 items-center justify-center">
            <svg viewBox="0 0 12 10" className="h-[10px] w-3">
              <path d="M.5 5.500h11v3H.5z" fill="#fff" stroke="#5a6068" />
            </svg>
          </button>
          <button aria-label="最大化" className="flex w-[26px] items-center justify-center">
            <svg viewBox="0 0 12 10" className="h-[10px] w-3">
              <path d="M.5.500h11v9H.5z" fill="#fff" stroke="#5a6068" />
              <path d="M3.500 3.500h5v3h-5z" fill="#dde6ee" stroke="#5a6068" />
            </svg>
          </button>
          <button aria-label="关闭" className="flex w-[42px] items-center justify-center">
            <svg viewBox="0 0 12 10" className="h-[10px] w-3">
              <path d="M.5.500h3.500l2 2.500L8 .5h3.500L8.500 5l3 4.500H8L6 7 4 9.500H.5L3.500 5z" fill="#fff" stroke="#5a6068" />
            </svg>
          </button>
        </div>
      </header>

      {/* Menu bar */}
      <nav className="flex h-11 shrink-0 items-center gap-3 border-b border-[#b6bfcf] bg-[linear-gradient(180deg,#fff_0,#e9edf7_9px,#d4d9ed_10px,#dfe5f4_100%)] pl-[3px] pt-[10px] text-xs leading-4">
        {menus.map((menu) => (
          <a key={menu.key} href="#" className="flex items-center">
            {menu.text}
            <span className="font-['Liberation_Mono',monospace] text-[10px]">
              (<u>{menu.key}</u>)
            </span>
          </a>
        ))}
        <a href="#" className="font-['Liberation_Mono',monospace] text-[10px]">keyshot4</a>
      </nav>

      {/* Toolbar */}
      <div className="flex h-[30px] shrink-0 items-center">
        <Grip first />
        {fileTools.map((tool) => <ToolButton key={tool.id} tool={tool} />)}
        <Grip />
        {editTools.map((tool) => <ToolButton key={tool.id} tool={tool} />)}
        <button aria-label="选取方式" className="flex w-[14px] items-center justify-center text-[#1c5c9c]">
          <Caret />
        </button>
        <Grip />
        {viewTools.map((tool) => <ToolButton key={tool.id} tool={tool} />)}
        <Grip />
        {displayTools.map((tool) => <ToolButton key={tool.id} tool={tool} />)}
        <Grip />
        {datumTools.map((tool) => <ToolButton key={tool.id} tool={tool} />)}
        <Grip />
        <ToolButton tool={{ id: 'help', label: '上下文帮助' }} />
      </div>

      <div className="flex min-h-0 flex-1">
        <ModelTree />
        <Splitter />
        <main className="relative min-w-0 flex-1 overflow-hidden bg-gradient-to-b from-[#9d9b8f] to-[#dfddd0]">
          <Model />
          <MassDialog />
        </main>
        <SideBar />
      </div>

      <footer className="h-[22px] shrink-0 border-t-2 border-[#f8f8f8] bg-[#e6e6e6]" />
      <Watermark />
    </div>
  );
}
